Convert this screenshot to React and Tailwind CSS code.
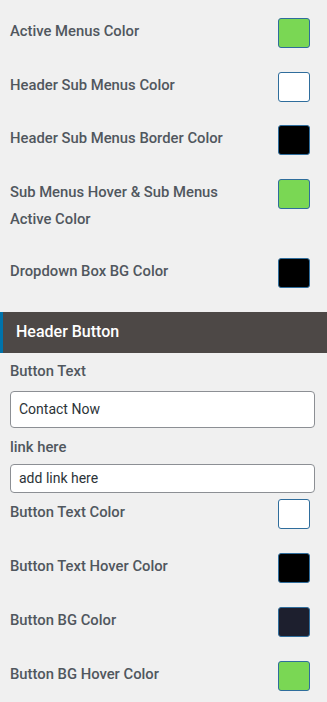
import React from "react";

const swatchRows1 = [
  { label: "Active Menus Color", color: "bg-[#7ad754]" },
  { label: "Header Sub Menus Color", color: "bg-white" },
  { label: "Header Sub Menus Border Color", color: "bg-black" },
  { label: "Sub Menus Hover & Sub Menus Active Color", color: "bg-[#7ad754]", wide: true },
  { label: "Dropdown Box BG Color", color: "bg-black" },
];

const swatchRows2 = [
  { label: "Button Text Color", color: "bg-white" },
  { label: "Button Text Hover Color", color: "bg-black" },
  { label: "Button BG Color", color: "bg-[#1d1f2e]" },
  { label: "Button BG Hover Color", color: "bg-[#7ad754]" },
];

const ColorRow = ({ label, color, wide, gap }) => (
  <div className={"flex items-start justify-between pl-[10px] pr-[17px] " + (wide ? "mb-[25.5px]" : gap)}>
    <span className={"leading-[27px] " + (wide ? "w-[230px]" : "")}>{label}</span>
    <span className={"block w-[32px] h-[30px] rounded-[3px] border border-[#2f6d9c] shrink-0 " + color}></span>
  </div>
);

const App = () => {
  return (
    <div
      className="min-h-screen bg-[#f0f0f0] text-[#50575e] text-[14.8px] font-medium pt-[18px] overflow-hidden"
      style={{ fontFamily: "Roboto, 'Liberation Sans', sans-serif" }}
    >
      {swatchRows1.map((r) => (
        <ColorRow key={r.label} gap="mb-[23.5px]" {...r} />
      ))}

      <div className="h-[41px] bg-[#4d4846] border-l-[3px] border-[#0073aa] flex items-center pl-[13px] text-white text-[16px]">
        Header Button
      </div>

      <div className="pl-[10px] pr-[12px]">
        <div className="leading-[27px] mt-[5px]">Button Text</div>
        <input
          type="text"
          defaultValue="Contact Now"
          className="mt-[6px] w-full h-[37px] bg-white border border-[#8c8f94] rounded-[4px] px-[8px] text-[14px] font-normal text-[#2c3338] outline-none"
        />
        <div className="leading-[27px] mt-[6px]">link here</div>
        <input
          type="text"
          defaultValue="add link here"
          className="mt-[3px] w-full h-[29px] bg-white border border-[#8c8f94] rounded-[4px] px-[8px] text-[14px] font-normal text-[#2c3338] outline-none"
        />
      </div>

      <div className="mt-[6px]">
        {swatchRows2.map((r) => (
          <ColorRow key={r.label} gap="mb-[24px]" {...r} />
        ))}
      </div>
    </div>
  );
};

export default App;
